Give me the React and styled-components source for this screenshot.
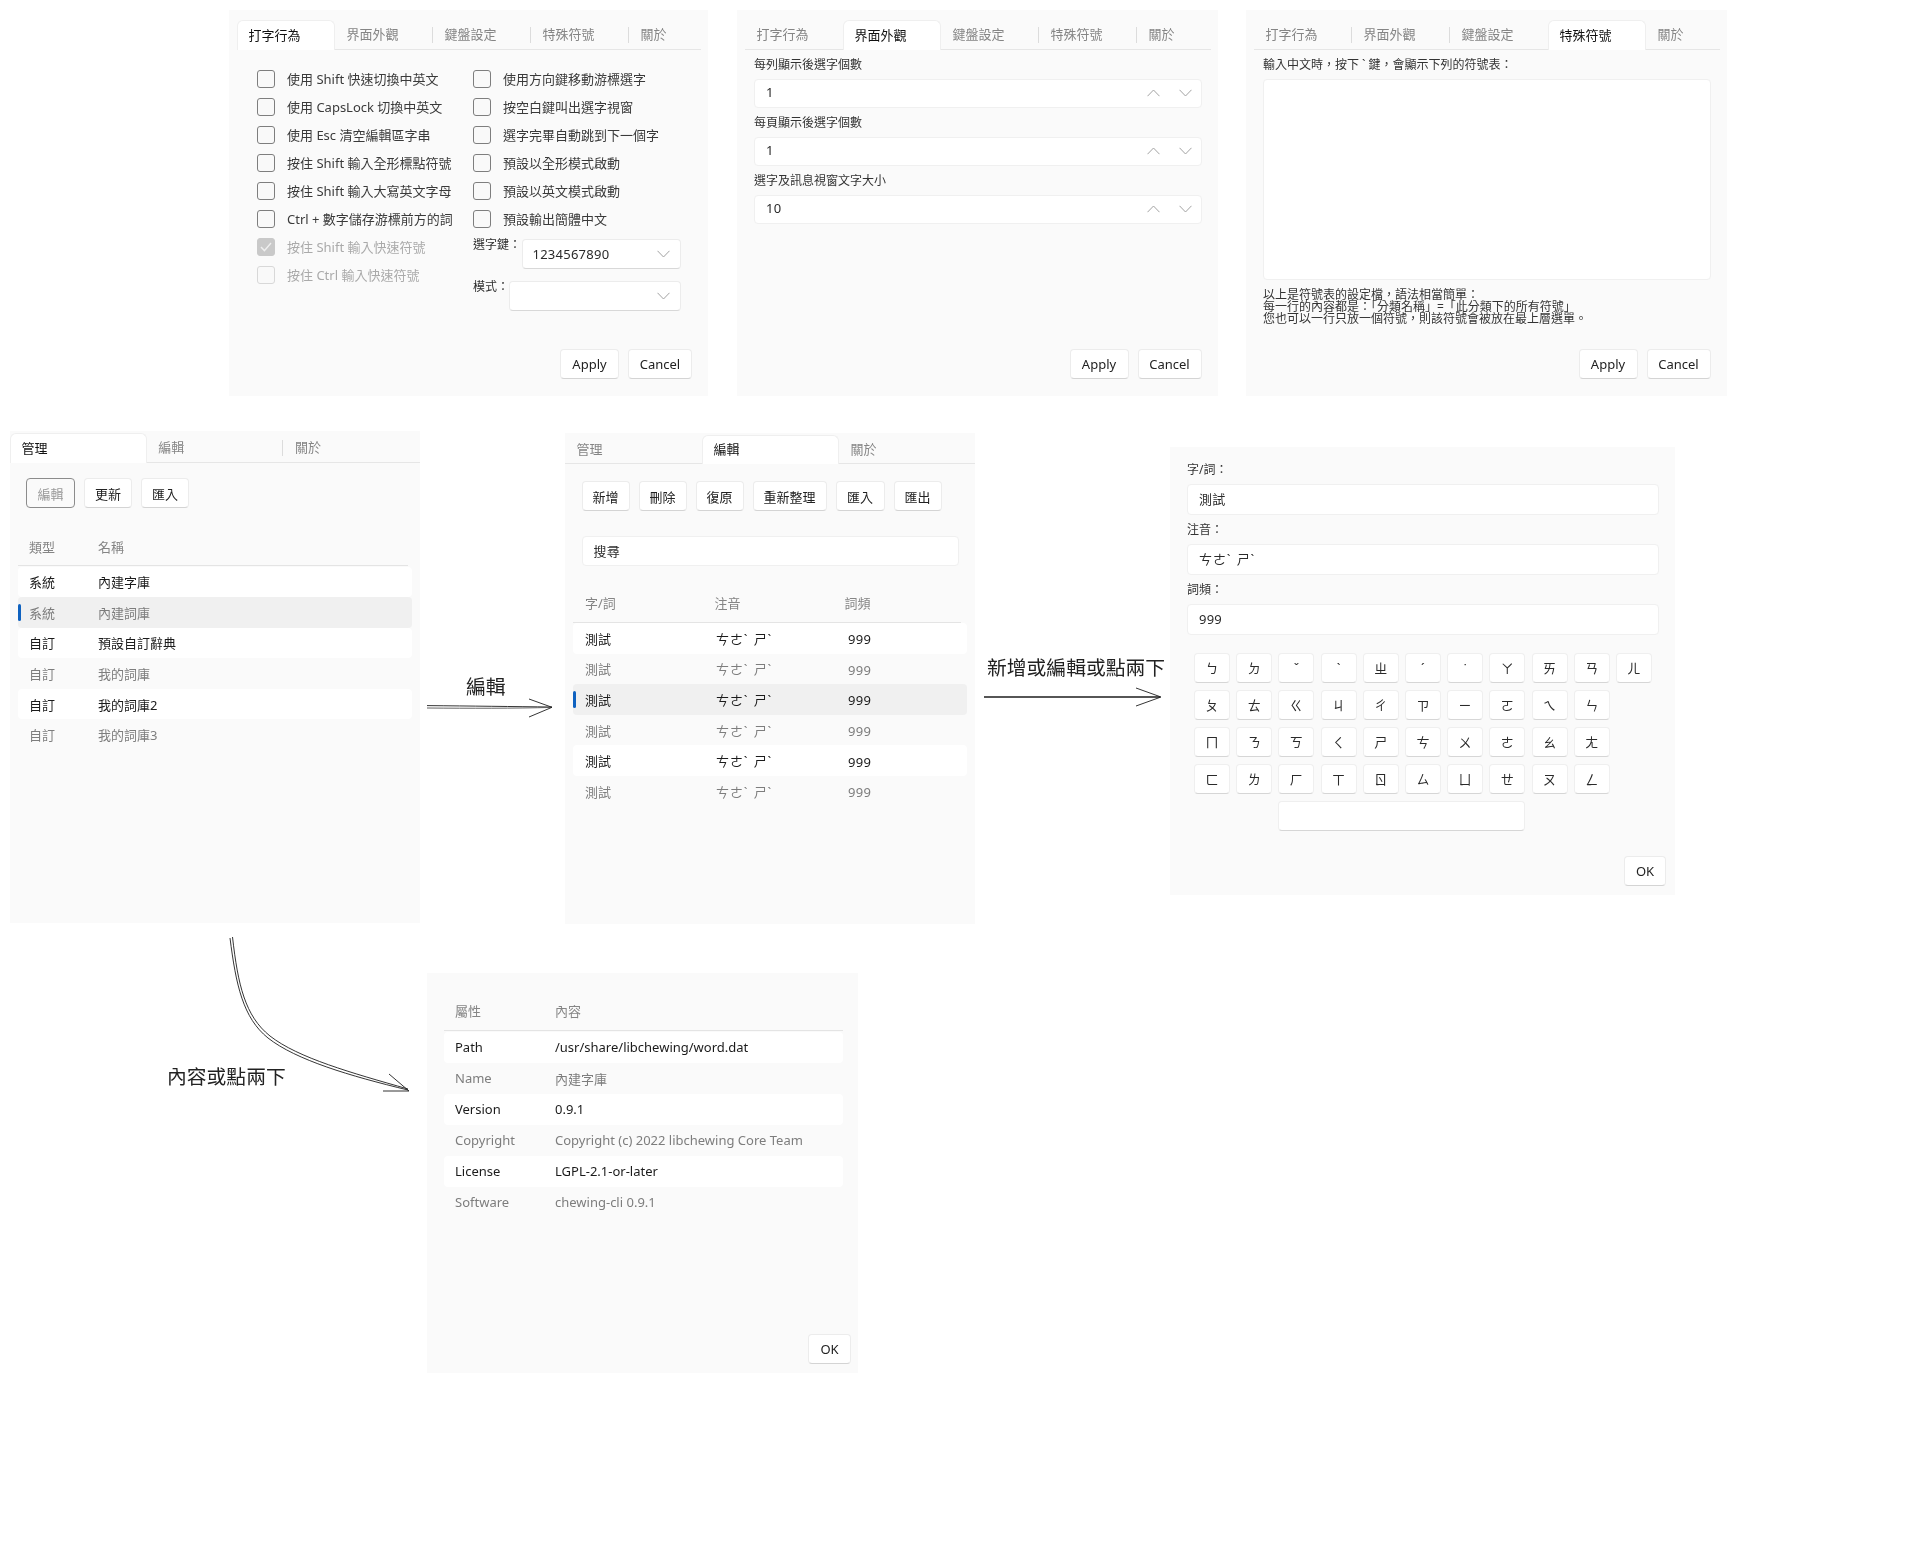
import React from 'react';
import styled, { createGlobalStyle, css } from 'styled-components';

const Global = createGlobalStyle`
  html, body { margin: 0; padding: 0; background: #fff; }
  body { font-family: "Noto Sans", "Noto Sans CJK TC", sans-serif; font-size: 13px; color: #2a2a2a; }
`;

const Canvas = styled.div`
  position: relative;
  width: 1922px;
  height: 1544px;
  overflow: hidden;
  background: #fff;
  filter: blur(0.35px);
`;

const Win = styled.section`
  position: absolute;
  left: ${p => p.$x}px;
  top: ${p => p.$y}px;
  width: ${p => p.$w}px;
  height: ${p => p.$h}px;
  box-sizing: border-box;
  padding: ${p => p.$pad || '0'};
  background: #fafafa;
  display: flex;
  flex-direction: column;
`;

const TabBar = styled.div`
  display: flex;
  flex: none;
  height: ${p => p.$h}px;
  margin: ${p => p.$m};
  border-bottom: 1px solid #e6e6e6;
  box-sizing: content-box;
`;

const TabItem = styled.div`
  position: relative;
  flex: none;
  box-sizing: border-box;
  width: ${p => p.$w}px;
  height: calc(100% + 1px);
  padding: 0 0 3px 11.5px;
  display: flex;
  align-items: center;
  color: ${p => (p.$active ? '#111' : '#858585')};
  ${p => p.$active && css`
    padding-left: 10.5px;
    background: #fff;
    border: 1px solid #efefef;
    border-bottom: none;
    border-radius: 6px 6px 0 0;
  `}
  ${p => p.$sep && css`
    &::after {
      content: '';
      position: absolute;
      right: 0;
      top: 7px;
      bottom: 7px;
      width: 1px;
      background: #dcdcdc;
    }
  `}
`;

function Tabs({ items, active, w, h, m }) {
  return (
    <TabBar $h={h} $m={m}>
      {items.map((t, i) => (
        <TabItem key={t} $w={w} $active={i === active}
          $sep={i !== active && i + 1 !== active && i !== items.length - 1}>{t}</TabItem>
      ))}
    </TabBar>
  );
}

const Btn = styled.button`
  font: inherit;
  height: 30px;
  box-sizing: border-box;
  width: ${p => p.$w}px;
  flex: none;
  padding: 0;
  background: ${p => (p.$focus ? '#fafafa' : '#fff')};
  color: ${p => (p.$focus ? '#999' : '#222')};
  border: 1px solid ${p => (p.$focus ? '#8c8c8c' : '#ececec')};
  border-bottom-color: ${p => (p.$focus ? '#8c8c8c' : '#d4d4d4')};
  border-radius: 4px;
`;

const Footer = styled.div`
  margin-top: auto;
  display: flex;
  justify-content: flex-end;
  gap: 9px;
  margin-right: ${p => p.$mr ?? 16}px;
`;

const Panel = styled.div`
  flex: 1;
  min-height: 0;
  padding: ${p => p.$pad};
`;

const TwoCols = styled.div`
  display: grid;
  grid-template-columns: 216px 208px;
  margin-left: 20px;
`;

const Col = styled.div`
  display: flex;
  flex-direction: column;
`;

const CheckRow = styled.div`
  display: flex;
  align-items: center;
  height: 28px;
  box-sizing: border-box;
  padding-bottom: 2px;
  gap: 12px;
  white-space: nowrap;
  color: ${p => (p.$off ? '#aaa' : '#3a3a3a')};
`;

const Box = styled.span`
  flex: none;
  width: 18px;
  height: 18px;
  margin-top: 2px;
  box-sizing: border-box;
  display: flex;
  align-items: center;
  justify-content: center;
  border: 1px solid ${p => (p.$off ? '#d8d8d8' : '#7e7e7e')};
  border-radius: 3px;
  background: ${p => (p.$on ? '#c9c9c9' : '#f9f9f9')};
  ${p => p.$on && 'border-color:#c9c9c9;'}
`;

const SelectRow = styled.div`
  display: flex;
  align-items: flex-start;
  margin-top: ${p => p.$mt}px;
  white-space: nowrap;
`;

const SelectLabel = styled.span`
  flex: none;
  width: 0;
  font-size: 12px;
  line-height: 20px;
  color: #2e2e2e;
  position: relative;
  top: -4px;
`;

const Select = styled.div`
  margin-left: ${p => p.$ml}px;
  width: ${p => p.$w}px;
  height: 30px;
  box-sizing: border-box;
  background: #fff;
  border: 1px solid #ececec;
  border-bottom-color: #d8d8d8;
  border-radius: 4px;
  display: flex;
  align-items: center;
  justify-content: space-between;
  padding: 0 10px 0 10px;
  letter-spacing: .25px;
`;

const Chevron = ({ up, size = 13 }) => (
  <svg width={size} height="8" viewBox="0 0 13 8" fill="none" stroke="#a2a2a2" strokeWidth="1">
    <path d={up ? 'M.5 7.2 6.5 1l6 6.2' : 'M.5 .8 6.5 7l6-6.2'} />
  </svg>
);

const FieldLabel = styled.div`
  height: ${p => p.$h}px;
  box-sizing: border-box;
  padding-bottom: ${p => p.$pb ?? 2}px;
  display: flex;
  align-items: center;
  color: #333;
  font-size: 12px;
`;

const Input = styled.div`
  height: ${p => p.$h}px;
  box-sizing: border-box;
  background: #fff;
  border: 1px solid #f0f0f0;
  border-radius: 4px;
  display: flex;
  align-items: center;
  padding: 0 11px ${p => p.$pb ?? 2}px;
  color: #2a2a2a;
  letter-spacing: .25px;
`;

const Spin = styled.div`
  margin-left: auto;
  margin-right: -2px;
  margin-top: 2px;
  display: flex;
  align-items: center;
  gap: 19px;
`;

const BigArea = styled.div`
  height: 201px;
  box-sizing: border-box;
  background: #fff;
  border: 1px solid #f0f0f0;
  border-radius: 4px;
`;

const Note = styled.div`
  margin-top: 9px;
  font-size: 12px;
  line-height: 12px;
  color: #333;
  white-space: nowrap;
`;

const Toolbar = styled.div`
  display: flex;
  gap: 9px;
  padding-left: ${p => p.$pl}px;
`;

const SearchBox = styled(Input)`
  margin: 25px 16px 0 16.5px;
`;

const TableHead = styled.div`
  display: grid;
  grid-template-columns: ${p => p.$cols};
  height: ${p => p.$h}px;
  align-items: center;
  padding-left: ${p => p.$pl ?? 12}px;
  margin: ${p => p.$m};
  border-bottom: 1px solid #e4e4e4;
  color: #858585;
  box-sizing: border-box;
`;

const RowList = styled.div`
  margin: ${p => p.$m};
`;

const Row = styled.div`
  position: relative;
  display: grid;
  grid-template-columns: ${p => p.$cols};
  height: ${p => p.$h}px;
  align-items: center;
  padding-left: ${p => p.$pl ?? 12}px;
  border-radius: 4px;
  color: #7d7d7d;
  &:nth-child(odd) {
    background: #fff;
    color: #1b1b1b;
  }
  ${p => p.$sel && css`
    &&, &&:nth-child(odd) { background: #f0f0f0; }
    &::before {
      content: '';
      position: absolute;
      left: 0;
      top: 7px;
      bottom: 7px;
      width: 3px;
      border-radius: 2px;
      background: #0f62c0;
    }
  `}
`;

const Bopo = styled.span`
  letter-spacing: .9px;
  word-spacing: 1px;
`;

const Digits = styled.span`
  letter-spacing: .35px;
  padding: 2px 0 0 1px;
`;

const Keyboard = styled.div`
  margin: 18px 0 0 7px;
  display: grid;
  grid-template-columns: repeat(11, 36px);
  column-gap: 6.2px;
  row-gap: 7px;
`;

const Key = styled.div`
  height: 30px;
  box-sizing: border-box;
  background: #fff;
  border: 1px solid #efefef;
  border-bottom-color: #d6d6d6;
  border-radius: 4px;
  display: flex;
  align-items: center;
  justify-content: center;
  color: #2a2a2a;
  grid-column: ${p => p.$span || 'auto'};
`;

const RowBreak = styled.div`
  grid-column: 11;
`;

const Hand = styled.div`
  position: absolute;
  left: ${p => p.$x}px;
  top: ${p => p.$y}px;
  font-family: "Noto Sans CJK TC", "Noto Sans", sans-serif;
  font-size: 19.8px;
  line-height: 26px;
  color: #222;
  white-space: nowrap;
`;

const Overlay = styled.svg`
  position: absolute;
  left: 0;
  top: 0;
`;

const prefTabs = ['打字行為', '界面外觀', '鍵盤設定', '特殊符號', '關於'];
const leftChecks = ['使用 Shift 快速切換中英文', '使用 CapsLock 切換中英文', '使用 Esc 清空編輯區字串', '按住 Shift 輸入全形標點符號', '按住 Shift 輸入大寫英文字母', 'Ctrl + 數字儲存游標前方的詞'];
const rightChecks = ['使用方向鍵移動游標選字', '按空白鍵叫出選字視窗', '選字完畢自動跳到下一個字', '預設以全形模式啟動', '預設以英文模式啟動', '預設輸出簡體中文'];
const libs = [['系統', '內建字庫'], ['系統', '內建詞庫'], ['自訂', '預設自訂辭典'], ['自訂', '我的詞庫'], ['自訂', '我的詞庫2'], ['自訂', '我的詞庫3']];
const props = [['Path', '/usr/share/libchewing/word.dat'], ['Name', '內建字庫'], ['Version', '0.9.1'], ['Copyright', 'Copyright (c) 2022 libchewing Core Team'], ['License', 'LGPL-2.1-or-later'], ['Software', 'chewing-cli 0.9.1']];
const keys = [
  ['ㄅ', 'ㄉ', 'ˇ', 'ˋ', 'ㄓ', 'ˊ', '˙', 'ㄚ', 'ㄞ', 'ㄢ', 'ㄦ'],
  ['ㄆ', 'ㄊ', 'ㄍ', 'ㄐ', 'ㄔ', 'ㄗ', 'ㄧ', 'ㄛ', 'ㄟ', 'ㄣ'],
  ['ㄇ', 'ㄋ', 'ㄎ', 'ㄑ', 'ㄕ', 'ㄘ', 'ㄨ', 'ㄜ', 'ㄠ', 'ㄤ'],
  ['ㄈ', 'ㄌ', 'ㄏ', 'ㄒ', 'ㄖ', 'ㄙ', 'ㄩ', 'ㄝ', 'ㄡ', 'ㄥ'],
];

const PrefFooter = () => (
  <Footer>
    <Btn $w={59}>Apply</Btn>
    <Btn $w={64}>Cancel</Btn>
  </Footer>
);

const SpinField = ({ value }) => (
  <Input $h={29} $pb={4}>
    {value}
    <Spin><Chevron up /><Chevron /></Spin>
  </Input>
);

export default function App() {
  return (
    <Canvas>
      <Global />

      <Win $x={229} $y={10} $w={479} $h={386} $pad="10px 0 17px">
        <Tabs items={prefTabs} active={0} w={98} h={29} m="0 7px 0 8px" />
        <Panel $pad="15px 0 0 8px">
          <TwoCols>
            <Col>
              {leftChecks.map(t => <CheckRow key={t}><Box />{t}</CheckRow>)}
              <CheckRow $off>
                <Box $on>
                  <svg width="12" height="10" viewBox="0 0 12 10" fill="none" stroke="#efefef" strokeWidth="1.4"><path d="M1 5l3.4 3.6L11 1" /></svg>
                </Box>按住 Shift 輸入快速符號
              </CheckRow>
              <CheckRow $off><Box $off />按住 Ctrl 輸入快速符號</CheckRow>
            </Col>
            <Col>
              {rightChecks.map(t => <CheckRow key={t}><Box />{t}</CheckRow>)}
              <SelectRow $mt={6}>
                <SelectLabel>選字鍵：</SelectLabel>
                <Select $ml={48.5} $w={159.5}>1234567890<Chevron /></Select>
              </SelectRow>
              <SelectRow $mt={12}>
                <SelectLabel>模式：</SelectLabel>
                <Select $ml={36} $w={172}><span /><Chevron /></Select>
              </SelectRow>
            </Col>
          </TwoCols>
        </Panel>
        <PrefFooter />
      </Win>

      <Win $x={737} $y={10} $w={480.5} $h={386} $pad="10px 0 17px">
        <Tabs items={prefTabs} active={1} w={98} h={29} m="0 7px 0 8px" />
        <Panel $pad="0 16px 0 17px">
          <FieldLabel $h={29}>每列顯示後選字個數</FieldLabel>
          <SpinField value="1" />
          <FieldLabel $h={29}>每頁顯示後選字個數</FieldLabel>
          <SpinField value="1" />
          <FieldLabel $h={29}>選字及訊息視窗文字大小</FieldLabel>
          <SpinField value="10" />
        </Panel>
        <PrefFooter />
      </Win>

      <Win $x={1246} $y={10} $w={480.5} $h={386} $pad="10px 0 17px">
        <Tabs items={prefTabs} active={3} w={98} h={29} m="0 7px 0 8px" />
        <Panel $pad="0 16px 0 17px">
          <FieldLabel $h={29}>輸入中文時，按下 ` 鍵，會顯示下列的符號表：</FieldLabel>
          <BigArea />
          <Note>
            以上是符號表的設定檔，語法相當簡單：<br />
            每一行的內容都是：「分類名稱」=「此分類下的所有符號」<br />
            您也可以一行只放一個符號，則該符號會被放在最上層選單。
          </Note>
        </Panel>
        <PrefFooter />
      </Win>

      <Win $x={10} $y={431} $w={410} $h={492} $pad="2px 0 0">
        <Tabs items={['管理', '編輯', '關於']} active={0} w={136.7} h={29} m="0" />
        <Panel $pad="15px 0 0">
          <Toolbar $pl={16}>
            <Btn $w={49} $focus>編輯</Btn>
            <Btn $w={48}>更新</Btn>
            <Btn $w={48}>匯入</Btn>
          </Toolbar>
          <TableHead $cols="69px 1fr" $h={39} $pl={11} $m="19px 12px 0 8px"><span>類型</span><span>名稱</span></TableHead>
          <RowList $m="0.5px 8px 0 8px">
            {libs.map((r, i) => (
              <Row key={i} $cols="69px 1fr" $h={30.6} $pl={11} $sel={i === 1}><span>{r[0]}</span><span>{r[1]}</span></Row>
            ))}
          </RowList>
        </Panel>
      </Win>

      <Win $x={565} $y={433} $w={410} $h={491} $pad="2px 0 0">
        <Tabs items={['管理', '編輯', '關於']} active={1} w={137} h={28} m="0" />
        <Panel $pad="17px 0 0">
          <Toolbar $pl={16.5}>
            {[['新增', 48], ['刪除', 48], ['復原', 48], ['重新整理', 74], ['匯入', 49], ['匯出', 48]].map(([t, w]) => (
              <Btn key={t} $w={w}>{t}</Btn>
            ))}
          </Toolbar>
          <SearchBox $h={30}>搜尋</SearchBox>
          <TableHead $cols="129.5px 130px 1fr" $h={40} $m="17px 14px 0 8px"><span>字/詞</span><span>注音</span><span>詞頻</span></TableHead>
          <RowList $m="0 8px">
            {[0, 1, 2, 3, 4, 5].map(i => (
              <Row key={i} $cols="131px 131px 1fr" $h={30.6} $sel={i === 2}>
                <span>測試</span><Bopo>ㄘㄜˋ ㄕˋ</Bopo><Digits>999</Digits>
              </Row>
            ))}
          </RowList>
        </Panel>
      </Win>

      <Win $x={1170} $y={447} $w={505} $h={448} $pad="7px 16px 9px 17px">
        <FieldLabel $h={30} $pb={0}>字/詞：</FieldLabel>
        <Input $h={30.5}>測試</Input>
        <FieldLabel $h={29.5} $pb={0}>注音：</FieldLabel>
        <Input $h={30.5}><Bopo>ㄘㄜˋ ㄕˋ</Bopo></Input>
        <FieldLabel $h={29.5} $pb={0}>詞頻：</FieldLabel>
        <Input $h={30.5} $pb={1}>999</Input>
        <Keyboard>
          {keys.map((row, ri) => (
            <React.Fragment key={ri}>
              {row.map(k => <Key key={k}>{k}</Key>)}
              {row.length < 11 && <RowBreak />}
            </React.Fragment>
          ))}
          <Key $span="3 / 9" />
        </Keyboard>
        <Footer $mr={-7}><Btn $w={42}>OK</Btn></Footer>
      </Win>

      <Win $x={427} $y={973} $w={431} $h={400} $pad="18px 7px 9px 17px">
        <TableHead $cols="100px 1fr" $h={39.5} $pl={11} $m="0 8px 0 0"><span>屬性</span><span>內容</span></TableHead>
        <RowList $m="1px 8px 0 0">
          {props.map(r => (
            <Row key={r[0]} $cols="100px 1fr" $h={31} $pl={11}><span>{r[0]}</span><span>{r[1]}</span></Row>
          ))}
        </RowList>
        <Footer $mr={0}><Btn $w={43}>OK</Btn></Footer>
      </Win>

      <Overlay width="1922" height="1544" fill="none" stroke="#1e1e1e" strokeWidth="0.9">
        <path d="M427 705.6 C470 706 515 706.6 552 707" />
        <path d="M427 708 C470 708.4 515 708.4 552 707.4" stroke="#555" />
        <path d="M529 699 L552 707.3 L529 717" />
        <path d="M984 697 L1160 697" strokeWidth="1.3" />
        <path d="M1136 688 L1161 697 L1136 706" />
        <path d="M230 938 C236 985 243 1018 268 1038 C296 1060 350 1076 408 1090" />
        <path d="M232.500 937 C238 985 245 1016 270 1036 C298 1058 352 1073 408 1089" />
        <path d="M389 1074 L409 1091 L383 1091" />
      </Overlay>
      <Hand $x={466} $y={673}>編輯</Hand>
      <Hand $x={987} $y={654}>新增或編輯或點兩下</Hand>
      <Hand $x={167} $y={1063}>內容或點兩下</Hand>
    </Canvas>
  );
}
